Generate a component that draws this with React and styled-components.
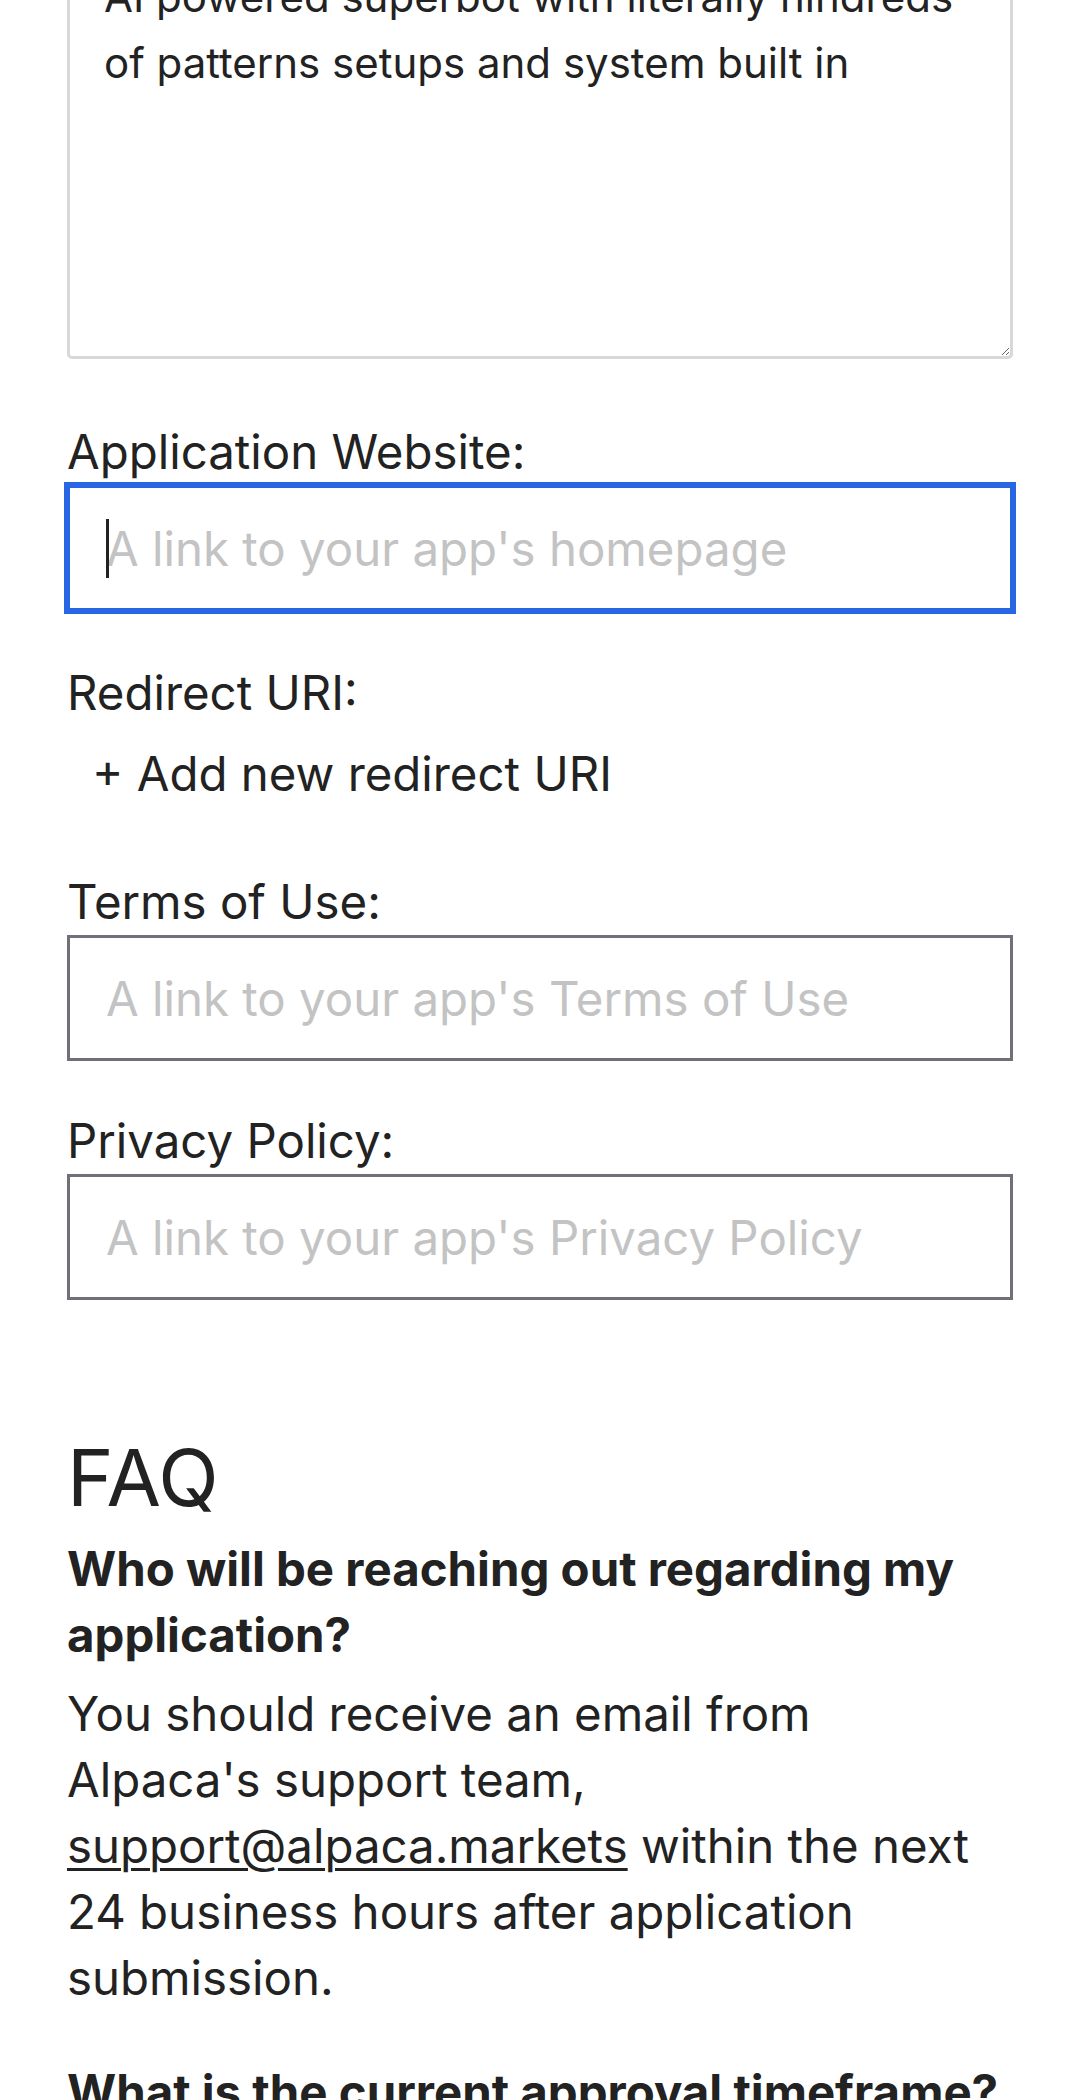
import React from "react";
import styled, { createGlobalStyle } from "styled-components";

const GlobalStyle = createGlobalStyle`
  html, body {
    margin: 0;
    padding: 0;
    background: #ffffff;
  }
  body {
    font-family: Inter, "Noto Sans", "Liberation Sans", sans-serif;
    color: #222222;
    overflow: hidden;
  }
  * {
    box-sizing: border-box;
  }
`;

const App = () => {
  return (
    <>
      <GlobalStyle />
      <Page>
        <Description
          defaultValue="AI powered superbot with literally hindreds of patterns setups and system built in"
        />

        <Field $gap="60px">
          <Label htmlFor="website">Application Website:</Label>
          <Focused>
            <Input id="website" type="text" placeholder="A link to your app's homepage" $focused />
          </Focused>
        </Field>

        <Field $gap="49px">
          <Label as="div">Redirect URI:</Label>
          <AddButton type="button">+ Add new redirect URI</AddButton>
        </Field>

        <Field $gap="62px">
          <Label htmlFor="terms">Terms of Use:</Label>
          <Input id="terms" type="text" placeholder="A link to your app's Terms of Use" />
        </Field>

        <Field $gap="47px">
          <Label htmlFor="privacy">Privacy Policy:</Label>
          <Input id="privacy" type="text" placeholder="A link to your app's Privacy Policy" />
        </Field>

        <Faq>
          <FaqTitle>FAQ</FaqTitle>
          <Question>Who will be reaching out regarding my application?</Question>
          <Answer>
            You should receive an email from
            <br />
            Alpaca's support team,{" "}
            <Link href="#support">support@alpaca.markets</Link> within the next
            24 business hours after application submission.
          </Answer>
          <Question $spaced>What is the current approval timeframe?</Question>
          <Answer>
            Applications are usually reviewed within a few business days.
          </Answer>
        </Faq>
      </Page>
    </>
  );
};

const Page = styled.main`
  display: flex;
  flex-direction: column;
  margin-top: -75px;
  padding: 0 67px;
  width: 1080px;
`;

const Description = styled.textarea`
  display: block;
  width: 100%;
  height: 434px;
  padding: 36px 34px;
  border: 3px solid #d8d8d8;
  border-radius: 5px;
  font-family: inherit;
  font-size: 42px;
  line-height: 66px;
  color: #222222;
  resize: vertical;
  outline: none;
`;

const Field = styled.div`
  display: flex;
  flex-direction: column;
  margin-top: ${(props) => props.$gap};
`;

const Label = styled.label`
  font-size: 47.4px;
  line-height: 66px;
  color: #222222;
`;

const Focused = styled.div`
  position: relative;
  display: flex;

  &::before {
    content: "";
    position: absolute;
    left: 39px;
    top: 34px;
    width: 3px;
    height: 59px;
    background: #222222;
  }
`;

const Input = styled.input`
  width: 100%;
  height: 126px;
  padding: 0 36px;
  border: 3px solid ${(props) => (props.$focused ? "#2866e3" : "#707078")};
  border-radius: 0;
  box-shadow: ${(props) => (props.$focused ? "0 0 0 3px #2866e3" : "none")};
  font-family: inherit;
  font-size: 47.4px;
  color: #222222;
  caret-color: transparent;
  outline: none;
  background: #ffffff;

  &::placeholder {
    color: #c3c3c3;
  }
`;

const AddButton = styled.button`
  align-self: flex-start;
  margin-top: 15px;
  padding: 0 0 0 25px;
  border: none;
  background: transparent;
  font-family: inherit;
  font-size: 47.4px;
  line-height: 66px;
  color: #222222;
  cursor: pointer;
`;

const Faq = styled.section`
  display: flex;
  flex-direction: column;
  margin-top: 127px;
`;

const FaqTitle = styled.h2`
  margin: 0;
  font-size: 79px;
  font-weight: 400;
  line-height: 100px;
  color: #222222;
`;

const Question = styled.h3`
  margin: ${(props) => (props.$spaced ? "48px" : "9px")} 0 0;
  font-size: 47.4px;
  font-weight: 700;
  line-height: 66px;
  color: #222222;
`;

const Answer = styled.p`
  margin: 13px 0 0;
  font-size: 47.4px;
  line-height: 66px;
  color: #222222;
`;

const Link = styled.a`
  color: #222222;
  text-decoration: underline;
  text-decoration-thickness: 3px;
  text-underline-offset: 5px;
`;

export default App;
